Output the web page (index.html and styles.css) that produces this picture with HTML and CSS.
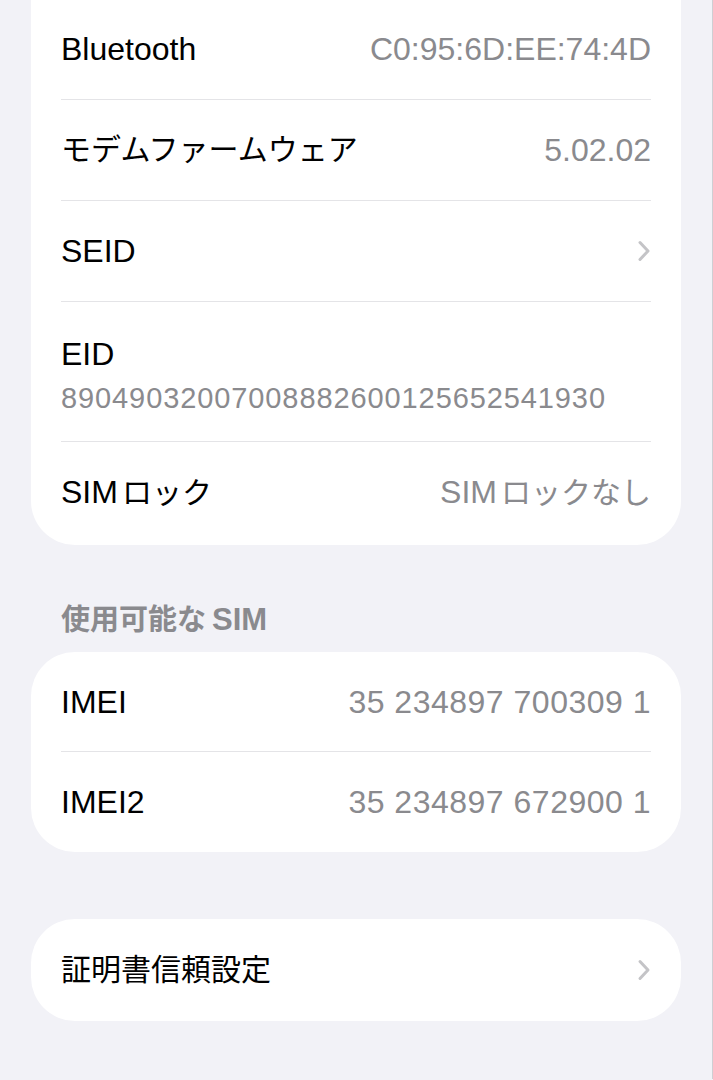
FILE: index.html
```html
<!DOCTYPE html>
<html lang="ja">
<head>
<meta charset="utf-8">
<title>情報</title>
<link rel="stylesheet" href="styles.css">
</head>
<body>
<div class="screen">
  <section class="group group-first">
    <div class="row"><span class="label">Bluetooth</span><span class="value">C0:95:6D:EE:74:4D</span></div>
    <div class="row"><span class="label ja">モデムファームウェア</span><span class="value">5.02.02</span></div>
    <div class="row"><span class="label">SEID</span><svg class="chev" width="14" height="22" viewBox="0 0 14 22"><path d="M3 2.5 L11 11 L3 19.5" fill="none" stroke="currentColor" stroke-width="3" stroke-linecap="round" stroke-linejoin="round"/></svg></div>
    <div class="row row-stack"><span class="label">EID</span><span class="sub">89049032007008882600125652541930</span></div>
    <div class="row"><span class="label">SIM<span class="ja gap">ロック</span></span><span class="value">SIM<span class="ja gap">ロックなし</span></span></div>
  </section>
  <h2 class="header">使用可能な<span class="gap-h">SIM</span></h2>
  <section class="group group-sim">
    <div class="row"><span class="label">IMEI</span><span class="value digits">35 234897 700309 1</span></div>
    <div class="row"><span class="label">IMEI2</span><span class="value digits">35 234897 672900 1</span></div>
  </section>
  <section class="group group-cert">
    <div class="row"><span class="label ja">証明書信頼設定</span><svg class="chev" width="14" height="22" viewBox="0 0 14 22"><path d="M3 2.5 L11 11 L3 19.5" fill="none" stroke="currentColor" stroke-width="3" stroke-linecap="round" stroke-linejoin="round"/></svg></div>
  </section>
</div>
</body>
</html>
```
FILE: styles.css
```css
html, body {
  margin: 0;
  padding: 0;
}
body {
  background: #f2f2f7;
  font-family: "Liberation Sans", "Noto Sans CJK JP", sans-serif;
  overflow: hidden;
  height: 1080px;
}
.screen {
  box-sizing: border-box;
  width: 713px;
  min-height: 1080px;
  padding: 0 31px 0 31px;
  border-right: 1px solid #cfcfd3;
}
.group {
  background: #ffffff;
  border-radius: 44px;
  overflow: hidden;
}
.group-first {
  margin-top: -1px;
  padding-bottom: 2px;
  border-top-left-radius: 0;
  border-top-right-radius: 0;
}
.row {
  box-sizing: border-box;
  display: flex;
  align-items: center;
  justify-content: space-between;
  gap: 16px;
  height: 101px;
  margin-left: 30px;
  margin-right: 30px;
  border-bottom: 1px solid #e4e4e7;
}
.row:last-child {
  border-bottom: none;
}
.group-sim .row {
  height: 100px;
}
.group-cert {
  margin-top: 67px;
}
.group-cert .row {
  height: 102px;
}
.label {
  font-size: 32px;
  line-height: 38px;
  color: #000000;
  white-space: nowrap;
}
.value {
  font-size: 32px;
  line-height: 38px;
  color: #8a8a8e;
  white-space: nowrap;
}
.ja {
  font-size: 30px;
}
.gap {
  margin-left: 4px;
}
.digits {
  letter-spacing: 0.5px;
}
.row-stack {
  height: 140px;
  flex-direction: column;
  align-items: flex-start;
  justify-content: flex-start;
  gap: 8px;
  padding-top: 33px;
}
.sub {
  font-size: 29px;
  line-height: 34px;
  letter-spacing: 0.9px;
  color: #8a8a8e;
  white-space: nowrap;
}
.chev {
  color: #c4c4c7;
  flex: none;
}
.header {
  margin: 58px 0 15px 0;
  padding-left: 30px;
  font-size: 29px;
  line-height: 34px;
  font-weight: 700;
  color: #8a8a8e;
}
.gap-h {
  margin-left: 6px;
  font-size: 31px;
}
```
